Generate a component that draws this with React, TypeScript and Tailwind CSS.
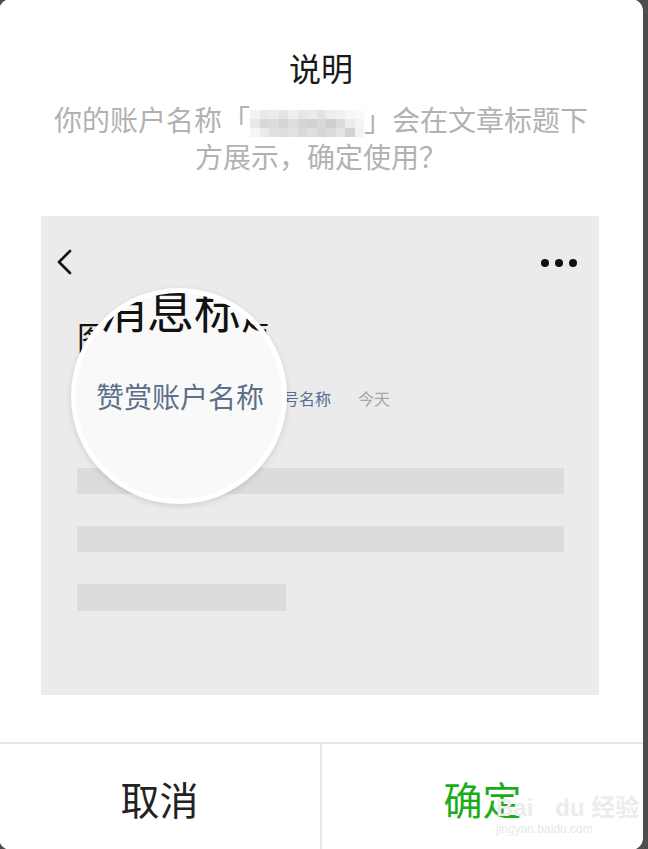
const FONT = { fontFamily: '"Noto Sans CJK SC", "Noto Sans", sans-serif' };

// pixelated name cells, 12 x 3
const BLUR = [
  "#f4f4f4", "#e9e9e9", "#ececec", "#e4e4e4", "#efefef", "#e6e6e6", "#eaeaea", "#e3e3e3", "#ededed", "#f2f2f2", "#f7f7f7", "#fafafa",
  "#e8e8e8", "#d9d9d9", "#dcdcdc", "#d4d4d4", "#dedede", "#d6d6d6", "#d2d2d2", "#d8d8d8", "#cfcfcf", "#dcdcdc", "#ececec", "#f5f5f5",
  "#f6f6f6", "#ebebeb", "#e0e0e0", "#dddddd", "#e2e2e2", "#d9d9d9", "#dfdfdf", "#d7d7d7", "#dbdbdb", "#e4e4e4", "#d3d3d3", "#f3f3f3",
];

function BlurredName() {
  return (
    <span className="inline-grid grid-cols-12 w-[114px] h-[27px] align-middle leading-[0px]">
      {BLUR.map((c, i) => (
        <span key={i} className="block w-full h-[9px]" style={{ backgroundColor: c }} />
      ))}
    </span>
  );
}

function ArticleMock() {
  return (
    <div className="relative mt-[41px] ml-[42px] w-[558px] h-[479px] bg-[#ebebeb] overflow-hidden">
      <div className="flex items-center justify-between pl-[15px] pr-[22px] pt-[33px]">
        <svg width="18" height="26" viewBox="0 0 18 26" fill="none">
          <path d="M14 2 L3 13 L14 24" stroke="#111" strokeWidth="2.6" strokeLinecap="round" strokeLinejoin="round" />
        </svg>
        <div className="flex gap-[6px] pt-[2px]">
          <span className="w-[8px] h-[8px] rounded-full bg-[#111]" />
          <span className="w-[8px] h-[8px] rounded-full bg-[#111]" />
          <span className="w-[8px] h-[8px] rounded-full bg-[#111]" />
        </div>
      </div>

      <div className="pl-[36px] pt-[45px] text-[32px] leading-[32px] text-[#111]">图文消息标题</div>

      <div className="flex items-center pl-[36px] pt-[38px] text-[16px] leading-[16px]">
        <span className="w-[55px] text-[#576b95]">原创</span>
        <span className="text-[#576b95]">赞赏账户名称</span>
        <span className="ml-[23px] text-[#576b95]">公众号名称</span>
        <span className="ml-[27px] text-[#a8a8a8]">今天</span>
      </div>

      <div className="flex flex-col gap-[32px] pl-[36px] pt-[62px]">
        <div className="w-[487px] h-[26px] bg-[#dcdcdc]" />
        <div className="w-[487px] h-[26px] bg-[#dcdcdc]" />
        <div className="w-[209px] h-[27px] bg-[#dcdcdc]" />
      </div>

      {/* magnifier lens */}
      <div className="absolute left-[30px] top-[72px] w-[216px] h-[216px] rounded-full border-[5px] border-white bg-[#f9f9f9] overflow-hidden shadow-[0_2px_6px_rgba(0,0,0,0.12)]">
        <div className="absolute left-[-70px] top-[-9px] whitespace-nowrap text-[47px] leading-[47px] text-[#111]">图文消息标题</div>
        <div className="absolute left-[20px] top-[89px] whitespace-nowrap text-[28px] leading-[28px] text-[#5b7089]">赞赏账户名称</div>
      </div>
    </div>
  );
}

export default function App() {
  return (
    <div className="flex w-[648px] h-[849px] bg-[#4d4d4d] overflow-hidden" style={FONT}>
      <div className="relative flex flex-col w-[644px] h-[851px] -mt-[1px] -ml-[1px] bg-white rounded-[12px] overflow-hidden">
        <div className="pt-[52px] text-center text-[32px] leading-[32px] text-[#1a1a1a]">说明</div>
        <div className="mt-[18px] text-center text-[28px] leading-[37px] text-[#b2b2b2]">
          <div className="h-[37px] whitespace-nowrap">
            你的账户名称「<BlurredName />」会在文章标题下
          </div>
          <div className="h-[37px]">方展示，确定使用？</div>
        </div>

        <ArticleMock />

        <div className="mt-auto flex h-[108px] border-t-2 border-[#e6e6e6]">
          <button className="flex-1 pt-[2px] text-[39px] text-[#222]">取消</button>
          <div className="w-[2px] bg-[#e6e6e6]" />
          <button className="flex-1 pt-[2px] text-[39px] text-[#1aad19]">确定</button>
        </div>

        <div className="absolute left-[497px] top-[796px] flex flex-col items-start pointer-events-none" style={{ fontFamily: '"Liberation Sans", "Noto Sans CJK SC", sans-serif' }}>
          <div className="text-[24px] leading-[26px] text-[#ececec] font-bold">Bai<span className="ml-[22px]">du</span> 经验</div>
          <div className="text-[12px] leading-[16px] text-[#e8e8e8]">jingyan.baidu.com</div>
        </div>
      </div>
    </div>
  );
}
